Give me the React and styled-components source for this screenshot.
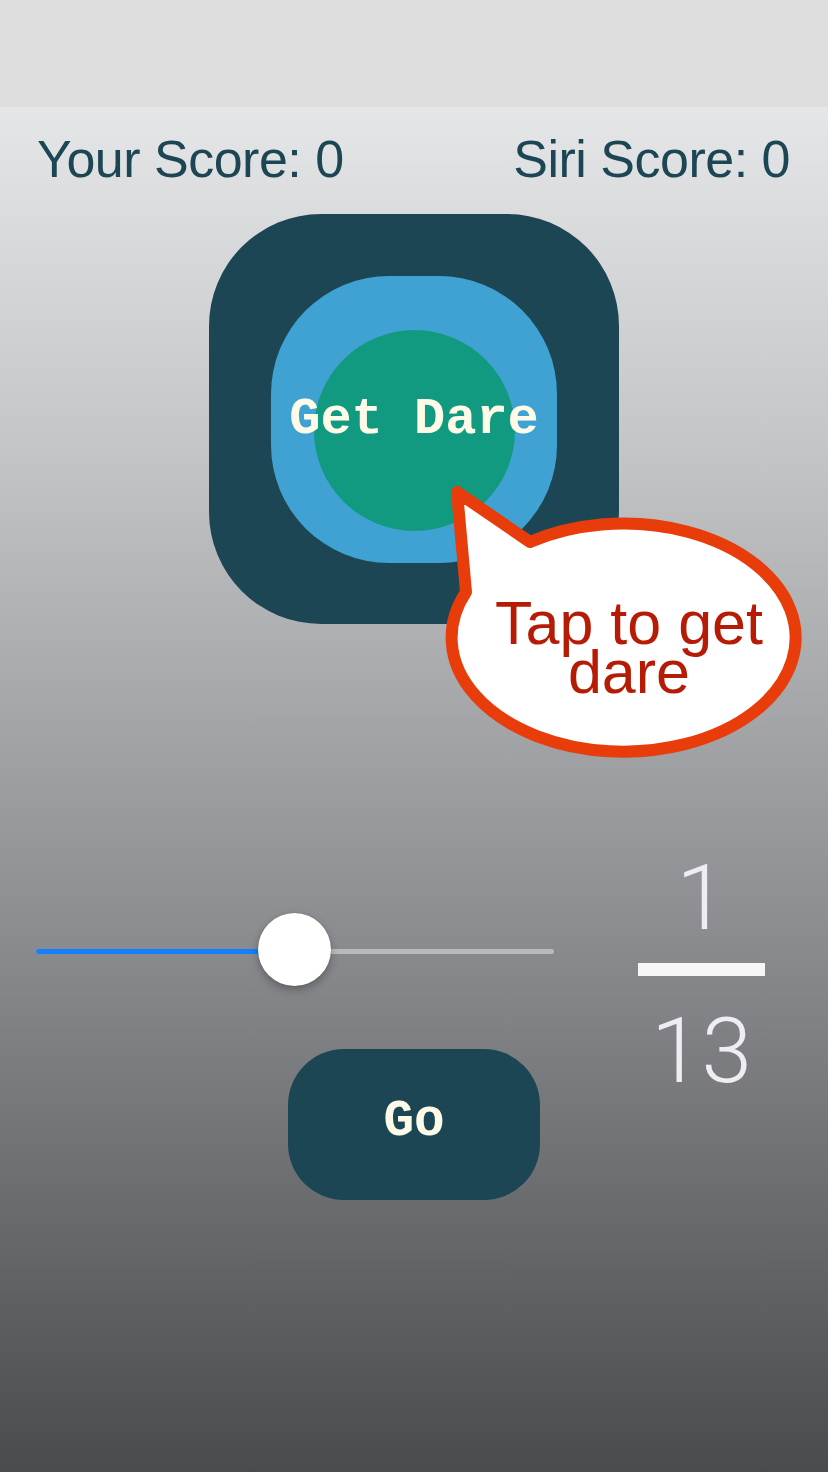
import React from "react";
import styled, { createGlobalStyle } from "styled-components";

const GlobalStyle = createGlobalStyle`
  html, body {
    margin: 0;
    padding: 0;
    background: #4a4b4d;
  }
  body {
    font-family: "Liberation Sans", Arial, sans-serif;
  }
`;

const Page = styled.div`
  width: 828px;
  height: 1472px;
  display: flex;
  flex-direction: column;
  overflow: hidden;
`;

const StatusBar = styled.div`
  height: 107px;
  background: #dedede;
  flex-shrink: 0;
`;

const Main = styled.div`
  flex: 1;
  position: relative;
  display: flex;
  flex-direction: column;
  background: linear-gradient(180deg, #e5e6e8 0%, #c4c5c7 25%, #8c8d90 60%, #4a4b4d 100%);
`;

const ScoreRow = styled.div`
  display: flex;
  justify-content: space-between;
  padding: 0 38px 0 37px;
  margin-top: 26px;
`;

const Score = styled.div`
  font-size: 52px;
  line-height: 1;
  letter-spacing: -0.5px;
  color: #1d4654;
`;

const DareBox = styled.div`
  width: 410px;
  height: 410px;
  margin: 29px auto 0;
  border-radius: 112px;
  background: #1d4654;
  display: flex;
  align-items: center;
  justify-content: center;
`;

const Ring = styled.div`
  width: 286px;
  height: 287px;
  border-radius: 118px;
  background: #3fa2d2;
  display: grid;
  place-items: center;
  cursor: pointer;
`;

const Core = styled.div`
  grid-area: 1 / 1;
  width: 201px;
  height: 201px;
  margin-top: 22px;
  border-radius: 50%;
  background: #129a80;
`;

const DareLabel = styled.span`
  grid-area: 1 / 1;
  font-family: "Liberation Mono", "Courier New", monospace;
  font-weight: 700;
  font-size: 52px;
  line-height: 1;
  color: #fdfbe8;
  white-space: pre;
  margin-top: 2px;
`;

const Bubble = styled.div`
  position: absolute;
  left: 440px;
  top: 371px;
  width: 370px;
  height: 286px;
  display: flex;
  flex-direction: column;
  align-items: center;
  padding: 121px 0 0 8px;
  box-sizing: border-box;
`;

const BubbleShape = styled.svg`
  position: absolute;
  inset: 0;
`;

const BubbleText = styled.div`
  position: relative;
  font-size: 61px;
  line-height: 49px;
  color: #b61c05;
  text-align: center;
`;

const Controls = styled.div`
  display: flex;
  align-items: flex-start;
  padding-left: 36px;
  margin-top: 229px;
`;

const LeftCol = styled.div`
  width: 518px;
  display: flex;
  flex-direction: column;
`;

const Slider = styled.div`
  position: relative;
  height: 73px;
  margin-top: 60px;
  display: flex;
  align-items: center;
`;

const Track = styled.div`
  height: 5px;
  margin-top: 4px;
  width: 100%;
  border-radius: 3px;
  background: #b9babc;
  overflow: hidden;
`;

const Fill = styled.div`
  height: 100%;
  background: #147efb;
`;

const Thumb = styled.div`
  position: absolute;
  top: 0;
  width: 73px;
  height: 73px;
  border-radius: 50%;
  background: #ffffff;
  box-shadow: 0 4px 9px rgba(0, 0, 0, 0.28), 0 0 1px rgba(0, 0, 0, 0.3);
`;

const GoButton = styled.button`
  width: 252px;
  height: 151px;
  margin: 63px 0 0 252px;
  border: none;
  border-radius: 56px;
  background: #1d4654;
  color: #fdfbe8;
  font-family: "Liberation Mono", "Courier New", monospace;
  font-weight: 700;
  font-size: 51px;
  padding: 0 0 6px;
  cursor: pointer;
`;

const Fraction = styled.div`
  width: 127px;
  margin-left: 84px;
  display: flex;
  flex-direction: column;
  align-items: center;
  font-family: Roboto, "Liberation Sans", sans-serif;
  font-weight: 300;
  font-size: 91px;
  line-height: 1;
  color: #efedf3;
`;

const FractionBar = styled.div`
  width: 127px;
  height: 13px;
  background: #f6f6f6;
  margin: 19px 0 30px;
`;

export default function App() {
  const thumbCenter = 258.5;

  return (
    <>
      <GlobalStyle />
      <Page>
        <StatusBar />
        <Main>
          <ScoreRow>
            <Score>Your Score: 0</Score>
            <Score>Siri Score: 0</Score>
          </ScoreRow>

          <DareBox>
            <Ring>
              <Core />
              <DareLabel>Get Dare</DareLabel>
            </Ring>
          </DareBox>

          <Bubble>
            <BubbleShape width="370" height="286" viewBox="440 478 370 286">
              <path
                d="M 466 592 L 457 492 L 530 542 A 172 114 0 1 1 466 592 Z"
                fill="#ffffff"
                stroke="#e83c0a"
                strokeWidth="12"
                strokeLinejoin="round"
              />
            </BubbleShape>
            <BubbleText>
              Tap to get
              <br />
              dare
            </BubbleText>
          </Bubble>

          <Controls>
            <LeftCol>
              <Slider>
                <Track>
                  <Fill style={{ width: `${thumbCenter}px` }} />
                </Track>
                <Thumb style={{ left: `${thumbCenter - 36.5}px` }} />
              </Slider>
              <GoButton>Go</GoButton>
            </LeftCol>
            <Fraction>
              <span>1</span>
              <FractionBar />
              <span>13</span>
            </Fraction>
          </Controls>
        </Main>
      </Page>
    </>
  );
}
